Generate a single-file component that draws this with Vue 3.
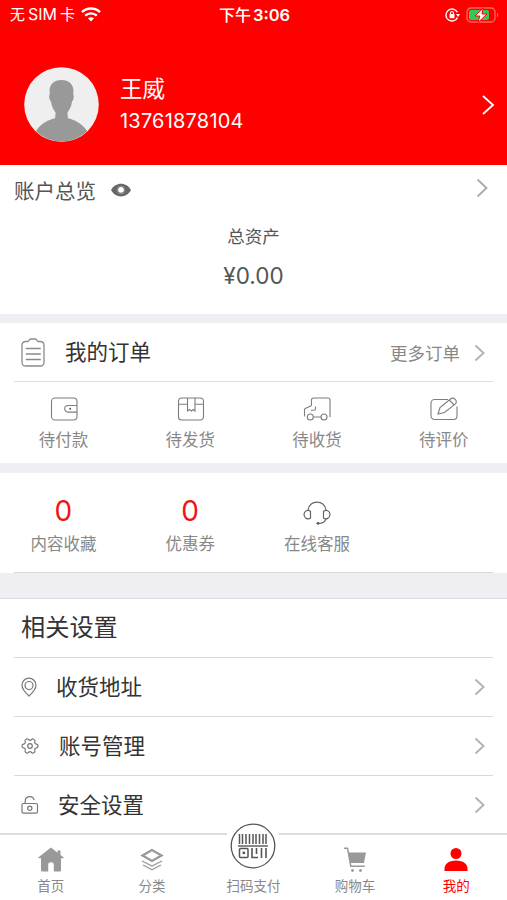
<script setup>
import { ref } from 'vue';

// Account data
const user = ref({ name: '王威', phone: '13761878104' });
const totalAssets = ref('¥0.00');
const showAssets = ref(true);

// Order status shortcuts
const orderItems = [
  { id: 'pay', label: '待付款' },
  { id: 'send', label: '待发货' },
  { id: 'receive', label: '待收货' },
  { id: 'review', label: '待评价' },
];

// Settings list
const settings = [
  { id: 'address', label: '收货地址' },
  { id: 'manage', label: '账号管理' },
  { id: 'security', label: '安全设置' },
];

// Bottom tabs
const tabs = [
  { id: 'home', label: '首页' },
  { id: 'category', label: '分类' },
  { id: 'scan', label: '扫码支付' },
  { id: 'cart', label: '购物车' },
  { id: 'mine', label: '我的' },
];
const activeTab = ref('mine');
</script>

<template>
  <div class="page">
    <!-- Header -->
    <header class="header">
      <div class="status-bar">
        <div class="status-left">
          <span class="carrier">无<span class="sim">SIM</span>卡</span>
          <svg class="wifi" width="20" height="15" viewBox="0 0 20 15" fill="none" stroke="#fff">
            <path d="M1 5.2C6 .4 14 .4 19 5.2" stroke-width="2.5" />
            <path d="M4.2 8.7c3.4-3.1 8.2-3.1 11.6 0" stroke-width="2.4" />
            <path d="M7 11.3c1.8-1.5 4.2-1.5 6 0L10 14.500z" fill="#fff" stroke="none" />
          </svg>
        </div>
        <div class="time">下午<span>3:06</span></div>
        <div class="status-right">
          <svg width="15" height="14" viewBox="0 0 15 14" fill="none" stroke="#fff">
            <path d="M12.3 4.3A6 6 0 1 0 12.4 9.6" stroke-width="1.4" />
            <path d="M11 6h4l-2 3z" fill="#fff" stroke="none" />
            <path d="M5.5 6.5V5a1.5 1.5 0 0 1 3 0v1.5" stroke-width="1.1" />
            <rect x="4.5" y="6" width="5" height="4.2" rx=".6" fill="#fff" stroke="none" />
          </svg>
          <svg width="33" height="16" viewBox="0 0 33 16">
            <rect x="1" y="1" width="28" height="14" rx="4" fill="none" stroke="#ff6660" stroke-width="1.3" />
            <path d="M31 5.5c1.6.8 1.6 4.2 0 5z" fill="#ff6660" />
            <rect x="3" y="3" width="20" height="10" rx="2" fill="#35c759" />
            <path d="M17.200 1 9 9h4.800l-1.800 6.500L21 7h-5z" fill="#fff" stroke="#f00" stroke-width="1" />
          </svg>
        </div>
      </div>
      <div class="profile">
        <svg class="avatar" width="75" height="75" viewBox="0 0 75 75">
          <defs>
            <clipPath id="avatar-clip"><circle cx="37.5" cy="37.5" r="37" /></clipPath>
          </defs>
          <circle cx="37.5" cy="37.5" r="37.3" fill="#efefef" />
          <g clip-path="url(#avatar-clip)" fill="#999">
            <path d="M37.5 13C30 13 25.5 17.5 25.5 24l.4 3c-1.2.5-.8 6 1 7.300.8 5 2.400 8.500 4.600 11.200V52h12v-6.500c2.200-2.700 3.800-6.200 4.600-11.200 1.800-1.300 2.200-6.800 1-7.300l.4-3c0-6.500-4.500-11-12-11z" />
            <path d="M31.5 48v3c-7 2.200-14 4.500-19.500 13v12h51V64c-5.500-8.500-12.500-10.800-19.500-13v-3z" />
          </g>
        </svg>
        <div class="user">
          <div class="user-name">{{ user.name }}</div>
          <div class="user-phone">{{ user.phone }}</div>
        </div>
        <svg class="arrow" width="14" height="22" viewBox="0 0 14 22" fill="none" stroke="#fff" stroke-width="1.8">
          <path d="m2 2 10 9L2 20" />
        </svg>
      </div>
    </header>

    <!-- Account overview -->
    <section class="account">
      <div class="account-head">
        <span class="account-title">账户总览</span>
        <svg class="eye" width="20" height="14" viewBox="0 0 20 14" @click="showAssets = !showAssets">
          <path d="M0 7C4.500-1.500 15.500-1.500 20 7 15.500 15.500 4.500 15.500 0 7z" fill="#666" />
          <circle cx="10" cy="7" r="3.900" fill="none" stroke="#999" stroke-width=".8" />
          <circle cx="10" cy="6.800" r="2.900" fill="#fff" />
        </svg>
        <svg class="arrow" width="12" height="20" viewBox="0 0 12 20" fill="none" stroke="#aaa" stroke-width="1.8">
          <path d="m1.500 1.500 9 8.500-9 8.500" />
        </svg>
      </div>
      <div class="assets-label">总资产</div>
      <div class="assets-value">{{ showAssets ? totalAssets : '****' }}</div>
    </section>

    <!-- Orders -->
    <section class="orders">
      <div class="orders-head">
        <svg width="26" height="29" viewBox="0 0 26 29" fill="none" stroke="#8a8a8a" stroke-width="1.3">
          <path d="M8 3.500H5.500A3.500 3.500 0 0 0 2 7v17.500A3.500 3.500 0 0 0 5.500 28h15a3.500 3.500 0 0 0 3.500-3.500V7a3.500 3.500 0 0 0-3.500-3.500H18C17 3.500 17 1 15.500 1h-5C9 1 9 3.500 8 3.500z" />
          <path d="M5.800 10.500h15M5.800 16h15M5.800 21.500h15" />
        </svg>
        <span class="orders-title">我的订单</span>
        <span class="orders-more">更多订单</span>
        <svg width="11" height="18" viewBox="0 0 11 18" fill="none" stroke="#b4b4b4" stroke-width="2">
          <path d="m1.500 1.500 8 7.500-8 7.500" />
        </svg>
      </div>
      <div class="grid">
        <div v-for="item in orderItems" :key="item.id" class="grid-item">
          <svg width="28" height="24" viewBox="0 0 28 24" fill="none" stroke="#7d7d7d" stroke-width="1.1">
            <template v-if="item.id === 'pay'">
              <rect x="1.500" y="1" width="25.500" height="22" rx="3.500" />
              <path d="M27 8.500h-9a3.300 3.300 0 0 0 0 6.600h9" />
              <circle cx="20.200" cy="11.800" r="1" fill="#555" stroke="none" />
            </template>
            <template v-else-if="item.id === 'send'">
              <path d="M1.500 7V4a3 3 0 0 1 3-3h19a3 3 0 0 1 3 3v16a3 3 0 0 1-3 3h-19a3 3 0 0 1-3-3zM1.500 7.200h9M18 7.200h8.500" />
              <path d="M10.500 1v13l2-1.500 2 1.500 1.800-1.500L18 14V1" />
            </template>
            <template v-else-if="item.id === 'receive'">
              <path d="M1.500 19.500v-6.500q0-1.200 1.200-1.700l4.600-2q1.200-.5 1.200-1.800V3a2 2 0 0 1 2-2h14.500a2 2 0 0 1 2 2v17" />
              <path d="M12.500 9.500v2.300q0 1.500-1.500 1.500H8M10.500 20h7.500" />
              <circle cx="7.300" cy="20" r="3" />
              <circle cx="21" cy="20" r="3" />
            </template>
            <template v-else>
              <path d="M18 2.500H4.500A3.500 3.500 0 0 0 1 6v13a3.500 3.500 0 0 0 3.500 3.500h19A3.500 3.500 0 0 0 27 19V9.500" />
              <path d="m8 17 2-6.500L20.500 2q2.500-2 4.700.3t.2 4.600L14.500 15.500zM19.300 3l4.800 5" />
            </template>
          </svg>
          <span>{{ item.label }}</span>
        </div>
      </div>
    </section>

    <!-- Favorites, coupons and service -->
    <section class="stats">
      <div class="stat"><b>0</b><span>内容收藏</span></div>
      <div class="stat"><b>0</b><span>优惠券</span></div>
      <div class="stat">
        <svg width="28" height="24" viewBox="0 0 28 24" fill="none" stroke="#666" stroke-width="1.2">
          <path d="M5 9.500C5.300-1.600 22.700-1.600 23 9.500" />
          <path d="M7.500 10.300v6.800q-2 1.400-4.200.3Q1 16.200 1 13.500t2.300-3.800q2.200-1 4.200.6zM20.500 10.300v6.800q2 1.400 4.200.3Q27 16.200 27 13.500t-2.300-3.800q-2.200-1-4.200.6zM23 18q-1.500 4.300-7 4.500" />
          <circle cx="15" cy="22.300" r="1.400" fill="#555" stroke="none" />
        </svg>
        <span>在线客服</span>
      </div>
    </section>

    <!-- Settings -->
    <section class="settings">
      <h2>相关设置</h2>
      <div v-for="item in settings" :key="item.id" class="setting-row" :class="item.id">
        <svg class="setting-icon" width="18" height="20" viewBox="0 0 18 20" fill="none" stroke="#777" stroke-width="1.2">
          <template v-if="item.id === 'address'">
            <path d="M8 19Q1 12.500 1 8.200a7 7 0 0 1 14 0Q15 12.500 8 19z" />
            <circle cx="8" cy="8.500" r="4" />
          </template>
          <template v-else-if="item.id === 'manage'">
            <path d="M5.200 3.200q1.300-.9 2.200.3 1.600 1.800 3.200 0 .9-1.200 2.200-.3 1.700 1 1.100 2.400-.8 2.100 1.600 2.500 1.500.3 1.500 1.900t-1.500 1.900q-2.400.4-1.600 2.500.6 1.400-1.100 2.400-1.300.9-2.200-.3-1.600-1.800-3.200 0-.9 1.200-2.200.3-1.700-1-1.100-2.400.8-2.100-1.600-2.500Q1 11.600 1 10t1.500-1.900q2.400-.4 1.600-2.500-.6-1.400 1.100-2.400z" />
            <circle cx="9" cy="10" r="2.300" />
          </template>
          <template v-else>
            <rect x="1" y="8.500" width="15.500" height="9.700" rx="1.500" />
            <path d="M4.200 8.500V6.200c0-5.500 7.600-6.200 9-1.200" />
            <circle cx="8.800" cy="13.200" r="2.100" />
          </template>
        </svg>
        <span>{{ item.label }}</span>
        <svg class="arrow" width="11" height="18" viewBox="0 0 11 18" fill="none" stroke="#b4b4b4" stroke-width="2">
          <path d="m1.500 1.500 8 7.500-8 7.500" />
        </svg>
      </div>
    </section>

    <!-- Tab bar -->
    <nav class="tabbar">
      <div
        v-for="tab in tabs"
        :key="tab.id"
        class="tab"
        :class="{ active: tab.id === activeTab }"
        @click="activeTab = tab.id"
      >
        <svg v-if="tab.id === 'home'" width="28" height="26" viewBox="0 0 28 26" fill="currentColor">
          <path d="M14 .500 1.500 10.300q-.6.900.5.900h2V23q0 1.500 1.500 1.500h5.700V18a2.800 2.800 0 0 1 5.600 0v6.500h5.700q1.500 0 1.500-1.500V11.200h2q1.100 0 .5-.9l-3-2.400V3.500h-3v2.200z" />
        </svg>
        <svg v-else-if="tab.id === 'category'" width="26" height="26" viewBox="0 0 26 26" fill="none" stroke="currentColor">
          <path d="M13 3 3.500 8.500 13 14l9.500-5.500z" stroke-width="2.300" />
          <path d="m3 14 10 5 10-5M4 18l9 4.800 9-4.800" stroke-width="1.300" />
        </svg>
        <div v-else-if="tab.id === 'scan'" class="scan">
          <svg width="46" height="46" viewBox="0 0 46 46" fill="none" stroke="#555">
            <circle cx="23" cy="23" r="21.800" stroke-width="1.300" fill="#fff" />
            <path d="M9.500 11v10M12.500 11v10M16 11v10M19.500 11v10M23 11v10M26 11v10M29.500 11v10M33 11v10M36 11v10" stroke-width="1.500" />
            <path d="M8 23h30" stroke-width="1.400" />
            <rect x="9.500" y="25.500" width="8.500" height="9" rx="1" stroke-width="1.500" />
            <rect x="12.600" y="28.600" width="2.500" height="2.500" fill="#555" stroke="none" />
            <path d="M22 25v9.500h6M26.500 25v6M31.500 25v10M36 25v10" stroke-width="1.600" />
          </svg>
        </div>
        <svg v-else-if="tab.id === 'cart'" width="24" height="26" viewBox="0 0 24 26" fill="currentColor">
          <path d="M5 5.500h18L21 16H7.500z" />
          <path d="M1 1.200h3.500l3.300 18h14" fill="none" stroke="currentColor" stroke-width="1.500" />
          <circle cx="9.500" cy="23.500" r="1.400" />
          <circle cx="17.500" cy="23.500" r="1.400" />
        </svg>
        <svg v-else width="26" height="26" viewBox="0 0 26 26" fill="currentColor">
          <circle cx="13" cy="6.500" r="5.500" />
          <path d="M1.500 24V22c0-5 4-8.500 11.500-8.500s11.500 3.500 11.500 8.500v2z" />
        </svg>
        <span>{{ tab.label }}</span>
      </div>
    </nav>
  </div>
</template>

<style>
body {
  background: #efeff4;
}
</style>

<style scoped>
.page {
  width: 507px;
  height: 900px;
  display: flex;
  flex-direction: column;
  overflow: hidden;
  background: #efeff3;
  color: #333;
  font-family: Inter, "Noto Sans CJK SC", sans-serif;
  white-space: nowrap;
}

.page svg {
  display: block;
  flex-shrink: 0;
}

.page > * {
  box-sizing: border-box;
  flex-shrink: 0;
}

.header {
  height: 165px;
  background: #f00;
  color: #fff;
}

.status-bar {
  height: 29px;
  padding: 0 8px 0 10px;
  display: grid;
  grid-template-columns: 1fr auto 1fr;
  align-items: center;
  font-size: 15px;
}

.carrier,
.time {
  margin-top: -2px;
}

.status-left,
.status-right {
  display: flex;
  align-items: center;
  gap: 6px;
}

.status-right {
  justify-content: flex-end;
}

.sim {
  margin: 0 3px;
  font-size: 16px;
}

.time {
  font-weight: 500;
  font-size: 16px;
}

.time span {
  margin-left: 2px;
  font-weight: 600;
  font-size: 16.5px;
}

.profile {
  display: flex;
  align-items: center;
  padding: 38px 12px 0 24px;
}

.user {
  margin-left: 21px;
}

.user-name {
  font-size: 22.5px;
  line-height: 32px;
}

.user-phone {
  font-size: 20px;
  line-height: 32px;
  letter-spacing: 0.2px;
}

.arrow {
  margin-left: auto;
}

.account {
  height: 149px;
  background: #fff;
  text-align: center;
  color: #555;
}

.account-head {
  display: flex;
  align-items: center;
  height: 50px;
  padding: 0 19px 0 14px;
}

.account-head .arrow {
  margin-top: -5px;
}

.account-title {
  font-size: 20.5px;
}

.eye {
  margin-left: 15px;
}

.assets-label {
  padding-top: 2px;
  font-size: 17.5px;
  line-height: 40px;
}

.assets-value {
  font-size: 22.5px;
  line-height: 37px;
}

.orders {
  height: 140px;
  margin-top: 9px;
  background: #fff;
}

.orders-head {
  display: flex;
  align-items: center;
  height: 59px;
  box-sizing: border-box;
  margin: 0 14px;
  padding: 1px 8px 0 6px;
  border-bottom: 1px solid #ddd;
}

.orders-title {
  margin: -4px 0 0 19px;
  font-size: 21.5px;
}

.orders-more {
  margin-left: auto;
  margin-right: 14px;
  color: #888;
  font-size: 17.5px;
}

.grid,
.stats {
  display: grid;
  grid-template-columns: repeat(4, 1fr);
}

.grid {
  padding-top: 15px;
}

.grid-item,
.stat {
  display: flex;
  flex-direction: column;
  align-items: center;
  color: #888;
  font-size: 16.5px;
}

.grid-item span,
.stat span {
  line-height: 24px;
}

.grid-item svg {
  margin-left: 1px;
}

.grid-item span {
  margin-top: 7px;
}

.stats {
  position: relative;
  height: 100px;
  margin-top: 10px;
  background: #fff;
}

.stats::after {
  content: "";
  position: absolute;
  left: 14px;
  right: 14px;
  bottom: 0;
  height: 1px;
  background: #d8d8dc;
}

.stat {
  padding-top: 20px;
}

.stat b {
  height: 39px;
  line-height: 36px;
  color: #f01414;
  font-weight: 400;
  font-size: 28px;
}

.stat svg {
  margin: 8px 0 7px;
}

.settings {
  height: 235px;
  margin-top: 25px;
  border-top: 1px solid #ddd;
  background: #fff;
  overflow: hidden;
}

.settings h2 {
  height: 57.5px;
  margin: 0 0 0 21px;
  font-size: 24.2px;
  font-weight: 400;
  line-height: 58px;
}

.setting-row {
  display: flex;
  align-items: center;
  box-sizing: border-box;
  height: 59.3px;
  margin: 0 14px;
  padding: 0 8px 0 7px;
  border-top: 1px solid #d9d9d9;
  font-size: 21.5px;
}

.setting-row span {
  margin: -3px 0 0 17px;
}

.setting-row.manage span {
  margin-left: 20px;
}

.setting-row.security span {
  margin-left: 19px;
}

.tabbar {
  display: grid;
  grid-template-columns: repeat(5, 1fr);
  height: 67px;
  border-top: 2px solid #dcdcdc;
  background: #fff;
}

.tab {
  display: flex;
  flex-direction: column;
  align-items: center;
  padding-top: 12px;
  color: #999;
  font-size: 13.5px;
}

.tab span {
  margin-top: 3px;
  line-height: 20px;
  color: #888;
}

.tab.active,
.tab.active span {
  color: #f00;
}

/* round button that rises above the bar */
.scan {
  display: flex;
  justify-content: center;
  width: 52px;
  height: 50px;
  margin-top: -24px;
  background: #fff;
}
</style>
